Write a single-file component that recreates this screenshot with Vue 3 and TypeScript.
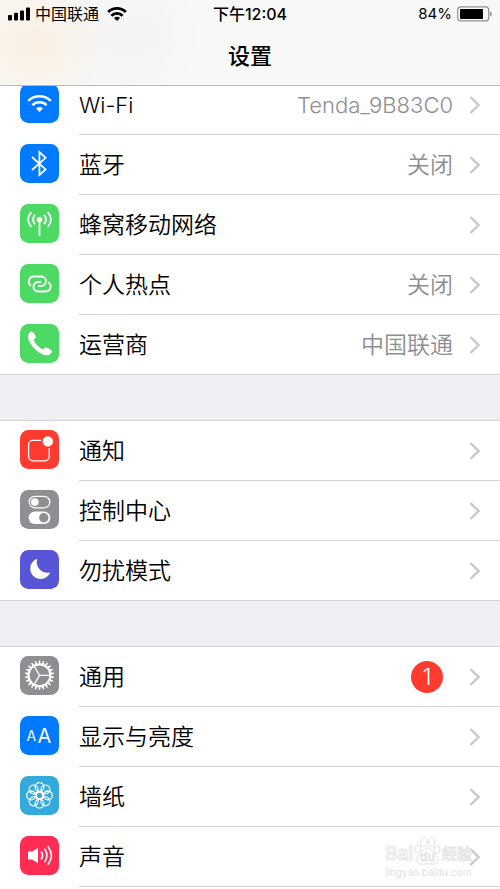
<script setup lang="ts">
interface Row {
  id: string
  label: string
  color: string
  value?: string
  badge?: number
}

const groups: Row[][] = [
  [
    { id: 'wifi', label: 'Wi-Fi', color: '#007aff', value: 'Tenda_9B83C0' },
    { id: 'bluetooth', label: '蓝牙', color: '#007aff', value: '关闭' },
    { id: 'cellular', label: '蜂窝移动网络', color: '#4cd964' },
    { id: 'hotspot', label: '个人热点', color: '#4cd964', value: '关闭' },
    { id: 'carrier', label: '运营商', color: '#4cd964', value: '中国联通' },
  ],
  [
    { id: 'notifications', label: '通知', color: '#ff3b30' },
    { id: 'control', label: '控制中心', color: '#8e8e93' },
    { id: 'dnd', label: '勿扰模式', color: '#5856d6' },
  ],
  [
    { id: 'general', label: '通用', color: '#8e8e93', badge: 1 },
    { id: 'display', label: '显示与亮度', color: '#007aff' },
    { id: 'wallpaper', label: '墙纸', color: '#34aadc' },
    { id: 'sound', label: '声音', color: '#ff2d55' },
  ],
]

const teeth = Array.from({ length: 22 }, (_, i) => (i * 360) / 22)
const petals = Array.from({ length: 8 }, (_, i) => i * 45)

const isLatin = (text: string): boolean => /^[\x20-\x7e]+$/.test(text)
</script>

<template>
  <div class="screen">
    <header class="header">
      <div class="status">
        <div class="side">
          <svg class="bars" width="23" height="14" viewBox="0 0 23 14" aria-hidden="true">
            <rect x="0" y="8" width="4" height="5.5" rx="1" />
            <rect x="6" y="5.8" width="4" height="7.7" rx="1" />
            <rect x="12" y="3.4" width="4" height="10.1" rx="1" />
            <rect x="18" y="0.6" width="4" height="12.9" rx="1" />
          </svg>
          <span>中国联通</span>
          <svg class="signal" width="20" height="14" viewBox="0 0 20 14" aria-hidden="true">
            <path d="M1.2 5A12.6 12.6 0 0 1 18.8 5" />
            <path d="M4.4 8.7A7.8 7.8 0 0 1 15.6 8.7" />
            <path class="solid" d="M7 11A4.2 4.2 0 0 1 13 11L10 14Z" />
          </svg>
        </div>
        <time class="clock">下午12:04</time>
        <div class="side end">
          <span class="percent">84%</span>
          <svg width="36" height="16" viewBox="0 0 36 16" aria-hidden="true">
            <rect x="1.7" y="0.9" width="31" height="14" rx="3" fill="none" stroke="#8f8f8f" stroke-width="1.2" />
            <rect x="4" y="3" width="23" height="10" rx="0.8" />
            <path d="M34 5.4Q35.8 6 35.8 8T34 10.6Z" fill="#8f8f8f" />
          </svg>
        </div>
      </div>
      <h1 class="title">设置</h1>
    </header>

    <main class="list">
      <nav v-for="(group, g) in groups" :key="g" class="group">
        <a v-for="row in group" :key="row.id" class="row" href="#">
          <svg class="icon" width="39" height="39" viewBox="0 0 39 39" aria-hidden="true">
            <rect width="39" height="39" rx="8.5" :fill="row.color" />
            <g v-if="row.id === 'wifi'" class="line" stroke-width="2.5">
              <path d="M8.2 16.8A16.4 16.4 0 0 1 30.8 16.8" />
              <path d="M12.4 21.1A10.4 10.4 0 0 1 26.6 21.1" />
              <path class="fill" d="M16.1 24.4A5.2 5.2 0 0 1 22.9 24.4L19.5 28Z" />
            </g>
            <path
              v-else-if="row.id === 'bluetooth'"
              class="line"
              stroke-width="1.8"
              d="M12 13L25.6 25.4L19.4 31V8L25.6 13.8L12 26"
            />
            <g v-else-if="row.id === 'cellular'" class="line" stroke-width="1.8">
              <circle class="fill" cx="19.5" cy="15.5" r="2.8" />
              <path d="M19.5 16V32" />
              <path d="M14.9 10.8Q11.2 15.5 14.9 20.2M24.1 10.8Q27.8 15.5 24.1 20.2" />
              <path d="M11.2 8.2Q4.8 15.5 11.2 22.8M27.8 8.2Q34.2 15.5 27.8 22.8" />
            </g>
            <g v-else-if="row.id === 'hotspot'" class="line" stroke-width="1.9">
              <path d="M11.2 21.8A5 5 0 0 1 13.8 12.5H21.2A4.7 4.7 0 0 1 21.2 22H18.4" />
              <path d="M28.2 18.2A5 5 0 0 1 25.6 27.5H18.2A4.7 4.7 0 0 1 18.2 18H21" />
            </g>
            <path
              v-else-if="row.id === 'carrier'"
              class="fill"
              d="M11.5 7.6C13.1 7.3 15.7 11.4 15.8 13.2C15.8 14.6 13.8 15.1 13.9 16.3C14.6 19.3 19.4 24.1 22.6 25.1C23.9 25.3 24.6 23.4 26 23.4C27.8 23.6 31.9 26 31.9 27.4C31.8 29.2 29 31.3 27 31.3C19 31.1 8.2 20.3 7.9 12C7.9 10 10 7.9 11.5 7.6Z"
            />
            <g v-else-if="row.id === 'notifications'">
              <rect class="line" x="8.6" y="10.4" width="20.6" height="20.4" rx="4.2" stroke-width="1.3" />
              <circle cx="27.8" cy="11.4" r="6.9" :fill="row.color" />
              <circle class="fill" cx="27.8" cy="11.4" r="5.2" />
            </g>
            <g v-else-if="row.id === 'control'">
              <rect class="line" x="9.2" y="6.4" width="20.6" height="11.4" rx="5.7" stroke-width="1.3" />
              <circle class="fill" cx="14.8" cy="12.1" r="3.8" />
              <rect class="fill" x="8.6" y="21.6" width="21.8" height="12.4" rx="6.2" />
              <circle cx="23.8" cy="27.8" r="4.7" :fill="row.color" />
            </g>
            <path
              v-else-if="row.id === 'dnd'"
              class="fill"
              d="M17.4 8.8A10.3 10.3 0 1 0 30.2 22.2A10.4 10.4 0 0 1 17.4 8.8Z"
            />
            <g v-else-if="row.id === 'general'" class="line" stroke-width="1.3">
              <circle cx="19.5" cy="19.3" r="10.9" stroke-width="2" />
              <path
                v-for="angle in teeth"
                :key="angle"
                class="fill"
                d="M18.3 8.2L18.9 4.6H20.1L20.7 8.2Z"
                :transform="`rotate(${angle} 19.5 19.3)`"
              />
              <path d="M19.5 19.3H30M19.5 19.3L14.2 10.2M19.5 19.3L14.2 28.4" />
            </g>
            <g v-else-if="row.id === 'display'" class="letters">
              <text x="6.6" y="24.7" font-size="14">A</text>
              <text x="17.6" y="27" font-size="20">A</text>
            </g>
            <g v-else-if="row.id === 'wallpaper'" class="line" stroke-width="1.3">
              <circle
                v-for="angle in petals"
                :key="angle"
                cx="19.5"
                cy="11"
                r="4.4"
                :transform="`rotate(${angle} 19.5 19.4)`"
              />
              <circle cx="19.5" cy="19.4" r="3.2" />
            </g>
            <g v-else-if="row.id === 'sound'" class="line" stroke-width="1.6">
              <path class="fill" d="M8 15.6H12.2L18 11.8V27.2L12.2 23.4H8Z" />
              <path d="M21 15.6Q24.2 19.5 21 23.4" />
              <path d="M24.4 12.8Q29.6 19.5 24.4 26.2" />
              <path d="M27.8 10.2Q35 19.5 27.8 28.8" />
            </g>
          </svg>
          <span class="body">
            <span class="label" :class="{ latin: isLatin(row.label) }">{{ row.label }}</span>
            <span v-if="row.value" class="value" :class="{ latin: isLatin(row.value) }">{{ row.value }}</span>
            <span v-if="row.badge" class="badge">{{ row.badge }}</span>
            <svg class="chevron" width="12" height="20" viewBox="0 0 12 20" aria-hidden="true">
              <path d="M1.4 2L9.6 10L1.4 18" />
            </svg>
          </span>
        </a>
      </nav>
    </main>

    <div class="watermark">
      <div class="brand">
        <span>Bai</span>
        <span class="paw">
          <svg width="27" height="30" viewBox="0 0 27 30" aria-hidden="true">
            <ellipse cx="4" cy="13" rx="3" ry="4" />
            <ellipse cx="10" cy="6" rx="3.2" ry="4.4" />
            <ellipse cx="17.5" cy="6" rx="3.2" ry="4.4" />
            <ellipse cx="23" cy="13.6" rx="3" ry="4" />
            <path d="M13.5 12C9.5 12 8 17 5 19.4C1 22.6 2.4 28.6 8 28.2Q13.5 27.4 19 28.2C24.6 28.6 26 22.6 22 19.4C19 17 17.5 12 13.5 12Z" />
          </svg>
          <span class="du">du</span>
        </span>
        <span class="cjk">经验</span>
      </div>
      <div class="site">jingyan.baidu.com</div>
    </div>
  </div>
</template>

<style>
body {
  margin: 0;
  background: #efeff4;
}
</style>

<style scoped>
.screen {
  position: relative;
  display: flex;
  flex-direction: column;
  min-height: 100vh;
  background: #efeff4;
  color: #000;
  font-family: Inter, 'Noto Sans CJK SC', sans-serif;
}

.header {
  position: sticky;
  top: 0;
  z-index: 1;
  box-sizing: border-box;
  height: 86px;
  border-bottom: 1px solid #b9b9bb;
  background:
    radial-gradient(circle at 36px 44px, #faf0e2 0, rgba(250, 240, 226, 0) 76px),
    radial-gradient(circle at 130px 36px, #f3f3f3 0, rgba(243, 243, 243, 0) 70px),
    #f8f8f8;
}

.status {
  display: grid;
  grid-template-columns: 1fr auto 1fr;
  align-items: center;
  height: 28px;
  padding: 0 8px;
  font-size: 16px;
  line-height: 28px;
}

.side {
  display: flex;
  align-items: center;
  gap: 4px;
}

.signal {
  margin-left: 4px;
  fill: none;
  stroke: #000;
  stroke-width: 2.8;
}

.signal .solid {
  fill: #000;
  stroke: none;
}

.end {
  justify-content: flex-end;
}

.percent {
  font-size: 15px;
}

.clock {
  font-weight: 500;
}

.title {
  margin: 0;
  font-size: 22px;
  font-weight: 500;
  line-height: 56px;
  text-align: center;
}

.list {
  display: flex;
  flex: 1;
  flex-direction: column;
  gap: 45px;
  margin-top: -12px;
}

.group {
  border-top: 1px solid #d3d3d8;
  background: #fff;
}

.group:last-child {
  flex: 1;
}

.row {
  display: flex;
  align-items: stretch;
  gap: 20px;
  height: 60px;
  padding-left: 20px;
  color: inherit;
  text-decoration: none;
}

.group:not(:last-child) .row:last-child {
  box-shadow: inset 0 -1px #d3d3d8;
}

.icon {
  flex: none;
  margin-top: 9px;
}

.line {
  fill: none;
  stroke: #fff;
}

.fill {
  fill: #fff;
  stroke: none;
}

.letters {
  fill: #fff;
  font-family: Inter, sans-serif;
}

.body {
  display: flex;
  flex: 1;
  align-items: center;
  padding-right: 19px;
  border-bottom: 1px solid #d3d3d8;
  font-size: 23px;
  font-weight: 350;
  line-height: 32px;
}

.label {
  flex: 1;
}

.value {
  color: #8e8e93;
}

.latin {
  font-size: 22px;
}

.badge {
  width: 32px;
  height: 32px;
  margin-right: 10px;
  border-radius: 50%;
  background: #ff3b30;
  color: #fff;
  text-align: center;
}

.chevron {
  flex: none;
  margin-left: 16px;
  fill: none;
  stroke: #c7c7cc;
  stroke-width: 2.4;
}

.watermark {
  position: absolute;
  right: 28px;
  bottom: 10px;
  z-index: 1;
  color: #fff;
  -webkit-text-stroke: 1px #e6e6e6;
}

.brand {
  display: flex;
  align-items: flex-end;
  gap: 1px;
  font-size: 19px;
  font-weight: 500;
  line-height: 24px;
}

.paw {
  position: relative;
  width: 27px;
  height: 30px;
}

.paw svg {
  fill: #fff;
  stroke: #e2e2e2;
}

.du {
  position: absolute;
  left: 6px;
  bottom: 1px;
  font-size: 12px;
  line-height: 16px;
}

.cjk {
  font-size: 15px;
}

.site {
  color: #e2e2e2;
  font-size: 10px;
  line-height: 13px;
  -webkit-text-stroke: 0;
}
</style>
